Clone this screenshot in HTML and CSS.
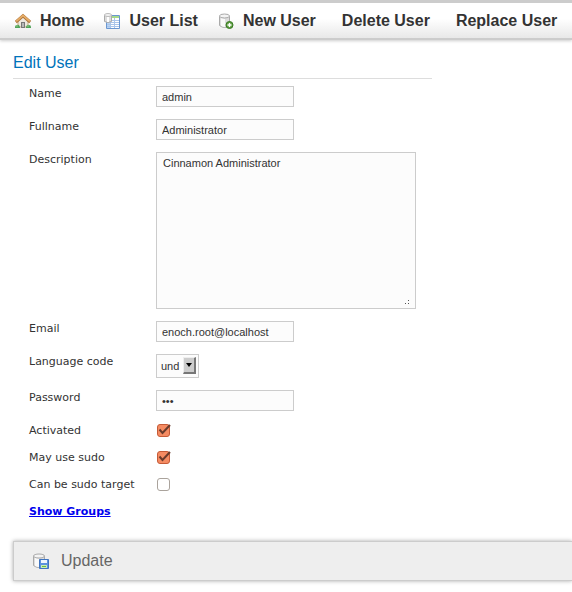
FILE: index.html
```html
<!DOCTYPE html>
<html lang="en">
<head>
<meta charset="utf-8">
<title>Edit User</title>
<link rel="stylesheet" href="styles.css">
</head>
<body>
<nav class="nav">
  <a class="nav-item" href="#">
    <svg class="icon" viewBox="0 0 16 16" aria-hidden="true">
      <path d="M3 7.500 8 3l5 4.500V14H3z" fill="#eee9df" stroke="#c5aa7d"/>
      <path d="M6 9h4v6H6z" fill="#777"/><path d="M7 10h2v4H7z" fill="#b8b8b8"/>
      <path d="M.8 9 8 2.800 15.200 9" fill="none" stroke="#ad7136" stroke-width="3"/>
      <path d="M1.200 8.400 8 2.500l6.800 5.900" fill="none" stroke="#e5ad68" stroke-width="1.800"/>
      <path d="M0 14q0-2 2-2 2-1 3 2v1H0zM11 14q1-3 3-2 2 0 2 2v1h-5z" fill="#51a35a"/>
      <path d="M1 13h2M12 13h2" stroke="#8fcb82"/>
    </svg>
    Home
  </a>
  <a class="nav-item" href="#">
    <svg class="icon" viewBox="0 0 16 16" aria-hidden="true">
      <path d="M2.500 2.500h13v13h-13z" fill="#fff" stroke="#6a97d1"/>
      <path d="M3 3h12v2H3z" fill="#a5d98a"/><path d="M3 5h3v10H3z" fill="#b9d3f3"/>
      <path d="M3 7.500h12M3 9.500h12M3 11.500h12M3 13.500h12M6.500 5v10M10.500 5v10" stroke="#a9c5ea"/>
      <path d="M.5 2v6.500Q4 10.500 7.500 8.500V2z" fill="#ddd" stroke="#aaa"/>
      <path d="M3 4v5h2V4z" fill="#fff"/>
      <ellipse cx="4" cy="2" rx="3.500" ry="1.500" fill="#f4f4f4" stroke="#bbb"/>
    </svg>
    User List
  </a>
  <a class="nav-item" href="#">
    <svg class="icon" viewBox="0 0 16 16" aria-hidden="true">
      <path d="M1.500 3v9.500Q6.500 16.500 11.500 12.500V3z" fill="#ddd" stroke="#aaa"/>
      <path d="M3 5v8q2 1 4 1V6z" fill="#fafafa"/>
      <ellipse cx="6.500" cy="3" rx="5" ry="2" fill="#f4f4f4" stroke="#aaa"/>
      <circle cx="11.500" cy="12" r="3.500" fill="#5d9f40" stroke="#397923"/>
      <path d="M11.500 10v4M9.500 12h4" stroke="#fff" stroke-width="1.400"/>
    </svg>
    New User
  </a>
  <a class="nav-item nav-item-plain" href="#">Delete User</a>
  <a class="nav-item nav-item-plain" href="#">Replace User</a>
</nav>
<main class="page">
  <form>
    <h1 class="title">Edit User</h1>
    <div class="fields">
      <label for="name">Name</label>
      <input class="box" id="name" type="text" value="admin">
      <label for="fullname">Fullname</label>
      <input class="box" id="fullname" type="text" value="Administrator">
      <label for="description">Description</label>
      <div class="area-wrap">
        <textarea class="box area" id="description">Cinnamon Administrator</textarea>
        <svg class="grip" viewBox="0 0 4 4" aria-hidden="true"><path d="M3 0h1v1H3zM0 3h1v1H0zM3 3h1v1H3z" fill="#555"/></svg>
      </div>
      <label for="email">Email</label>
      <input class="box" id="email" type="email" value="enoch.root@localhost">
      <label for="language">Language code</label>
      <div class="select-wrap">
        <select class="box select" id="language"><option>und</option></select>
        <span class="arrow"><svg viewBox="0 0 6 4" aria-hidden="true"><path d="M0 0h6L3 4z"/></svg></span>
      </div>
      <label for="password">Password</label>
      <input class="box" id="password" type="password" value="abc">
      <label for="activated">Activated</label>
      <div class="check-wrap">
        <input class="check" id="activated" type="checkbox" checked>
        <svg class="tick" viewBox="0 0 15 14" aria-hidden="true"><path d="M3.500 6.500 6.500 10 14 2" fill="none" stroke="#693b2c" stroke-width="2"/></svg>
      </div>
      <label for="sudo">May use sudo</label>
      <div class="check-wrap">
        <input class="check" id="sudo" type="checkbox" checked>
        <svg class="tick" viewBox="0 0 15 14" aria-hidden="true"><path d="M3.500 6.500 6.500 10 14 2" fill="none" stroke="#693b2c" stroke-width="2"/></svg>
      </div>
      <label for="target">Can be sudo target</label>
      <div class="check-wrap"><input class="check" id="target" type="checkbox"></div>
      <a class="groups" href="#">Show Groups</a>
    </div>
    <div class="actions">
      <button class="update" type="submit">
        <svg class="icon" viewBox="0 0 16 16" aria-hidden="true">
          <path d="M.5 3v9.500Q5.500 16.500 11.500 12.500V3z" fill="#ddd" stroke="#aaa"/>
          <path d="M2 5v8q2 1 4 1V6z" fill="#fafafa"/>
          <ellipse cx="6" cy="3" rx="5.500" ry="2" fill="#f4f4f4" stroke="#aaa"/>
          <path d="M6.500 6.500h9v9h-9z" fill="#5b91de" stroke="#3f74c0"/>
          <path d="M8 7h6v3H8z" fill="#eef5ff"/><path d="M8 12h6v3H8z" fill="#c9ebb5"/><path d="M9 13h4v1H9z" fill="#69b943"/>
        </svg>
        Update
      </button>
    </div>
  </form>
</main>
</body>
</html>
```
FILE: styles.css
```css
* {
  box-sizing: border-box;
}

body {
  margin: 0;
  background: #fff;
  color: #333;
  font: 11px/15px "DejaVu Sans", sans-serif;
}

.nav {
  display: flex;
  align-items: center;
  gap: 20px;
  height: 40px;
  padding: 0 15px;
  border-top: 3px solid #ccc;
  border-bottom: 2px solid #ccc;
  background: linear-gradient(#fff 45%, #e8e8e8);
  box-shadow: 0 1px 3px #ccc;
  white-space: nowrap;
}

.nav-item {
  display: flex;
  flex-shrink: 0;
  align-items: center;
  gap: 9px;
  color: #333;
  font: bold 16px/20px "Liberation Sans", sans-serif;
  text-decoration: none;
}

.nav-item-plain {
  padding-left: 6px;
}

.icon {
  width: 16px;
  height: 16px;
}

.page {
  padding: 13px 0 12px 13px;
}

.title {
  max-width: 419px;
  margin: 0 0 7px;
  padding-bottom: 5px;
  border-bottom: 1px solid #ddd;
  color: #0073ba;
  font: 16px/20px "Liberation Sans", sans-serif;
}

.fields {
  display: grid;
  grid-template-columns: 127px minmax(0, 260px);
  row-gap: 12px;
  justify-items: start;
  align-items: start;
  padding-left: 16px;
}

.box {
  display: block;
  width: 138px;
  height: 21px;
  margin: 0;
  padding: 0 5px;
  border: 1px solid #ccc;
  border-radius: 0;
  background: #fcfcfc;
  color: #333;
  font: 11px/13px "Liberation Sans", sans-serif;
}

.area-wrap {
  position: relative;
  width: 100%;
}

.area {
  width: 100%;
  height: 157px;
  padding: 4px 6px;
  resize: none;
}

.grip {
  position: absolute;
  right: 7px;
  bottom: 5px;
  width: 4px;
  height: 4px;
}

.select-wrap {
  position: relative;
}

.select {
  width: 43px;
  height: 24px;
  padding: 0 4px;
  appearance: none;
}

.arrow {
  position: absolute;
  top: 3px;
  right: 3px;
  display: grid;
  place-items: center;
  width: 13px;
  height: 17px;
  border: 1px solid;
  border-width: 1px 2px 2px 1px;
  border-color: #eee #777 #777 #eee;
  background: #ccc;
  pointer-events: none;
}

.arrow svg {
  width: 6px;
  height: 4px;
}

.check-wrap {
  position: relative;
  height: 15px;
  padding: 1px;
}

.check {
  display: block;
  width: 13px;
  height: 13px;
  margin: 0;
  border: 1px solid #aaa39c;
  border-radius: 3px;
  background: #fff;
  appearance: none;
}

.check:checked {
  border-color: #c55b38;
  background: #f58b62;
}

.tick {
  position: absolute;
  top: 0;
  left: 0;
  width: 15px;
  height: 14px;
  pointer-events: none;
}

.groups {
  grid-column: 1 / -1;
  color: #00e;
  font-weight: bold;
}

.actions {
  margin-top: 22px;
  border: 1px solid #ccc;
  border-right: 0;
  background: #eee;
  box-shadow: 0 0 4px #aaa;
}

.update {
  display: flex;
  align-items: center;
  gap: 12px;
  height: 38px;
  padding: 0 19px;
  border: 0;
  background: none;
  color: #666;
  font: 16px/20px "Liberation Sans", sans-serif;
}
```
